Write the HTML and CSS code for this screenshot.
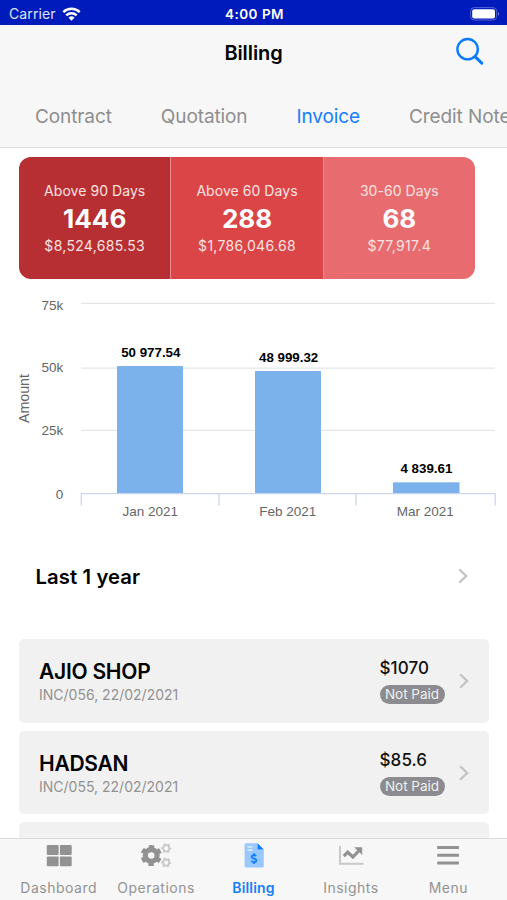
FILE: index.html
```html
<!DOCTYPE html>
<html lang="en">
<head>
	<meta charset="UTF-8">
	<meta name="viewport" content="width=device-width, initial-scale=1.0">
	<title>Billing</title>
	<link rel="stylesheet" href="styles.css">
</head>
<body>
	<div class="app">
		<div class="status_bar">
			<div class="carrier">
				<span>Carrier</span>
				<svg width="19" height="14" viewBox="0 0 19 14" fill="none" stroke="#fff" stroke-width="2.5">
					<path d="M1.3 5.1a11.8 11.8 0 0 1 16.4 0"/>
					<path d="M4.3 8.3a7.5 7.5 0 0 1 10.4 0"/>
					<path d="M6.5 10.7a4.3 4.3 0 0 1 6 0L9.5 13.8z" fill="#fff" stroke="none"/>
				</svg>
			</div>
			<span class="clock">4:00 PM</span>
			<div class="battery">
				<svg width="30" height="14" viewBox="0 0 30 14">
					<rect x="0.6" y="0.6" width="26" height="12.4" rx="3.6" fill="none" stroke="#5563d6" stroke-width="1"/>
					<rect x="2.2" y="2.2" width="22.8" height="9.2" rx="2" fill="#fff"/>
					<path d="M28 4.9c1.6.7 1.6 3.1 0 3.8z" fill="#7683e2"/>
				</svg>
			</div>
		</div>

		<div class="header">
			<h1>Billing</h1>
			<svg class="search" width="30" height="30" viewBox="0 0 30 30" fill="none" stroke="#0a7aff" stroke-width="2.4" stroke-linecap="round">
				<circle cx="12.6" cy="12.2" r="10.2"/>
				<path d="M20 19.6l6.8 6.6" stroke-width="3"/>
			</svg>
		</div>

		<div class="tabs">
			<span class="tab">Contract</span>
			<span class="tab">Quotation</span>
			<span class="tab active">Invoice</span>
			<span class="tab">Credit Note</span>
		</div>

		<div class="content">
			<div class="aging">
				<div class="aging_box a90">
					<span class="label">Above 90 Days</span>
					<strong>1446</strong>
					<span class="sum">$8,524,685.53</span>
				</div>
				<div class="aging_box a60">
					<span class="label">Above 60 Days</span>
					<strong>288</strong>
					<span class="sum">$1,786,046.68</span>
				</div>
				<div class="aging_box a30">
					<span class="label">30-60 Days</span>
					<strong>68</strong>
					<span class="sum">$77,917.4</span>
				</div>
			</div>

			<svg class="chart" width="507" height="240" viewBox="0 290 507 240">
				<g class="grid">
					<path d="M81 303.4H495M81 368.2H495M81 430.4H495"/>
				</g>
				<g class="bars">
					<rect x="117" y="366" width="66" height="127.5"/>
					<rect x="255" y="371" width="66" height="122.5"/>
					<rect x="393" y="482.3" width="66.5" height="11.2"/>
				</g>
				<path class="axis" d="M81 493.7H495.5M81.3 493.5V505.5M219 493.5V505.5M356 493.5V505.5M495.2 493.5V505.5"/>
				<g class="y_labels">
					<text x="63.3" y="309.8">75k</text>
					<text x="63.3" y="371.8">50k</text>
					<text x="63.3" y="435.3">25k</text>
					<text x="63.3" y="498.8">0</text>
				</g>
				<text class="y_title" transform="translate(29 398.5) rotate(-90)">Amount</text>
				<g class="x_labels">
					<text x="150.3" y="516">Jan 2021</text>
					<text x="287.8" y="516">Feb 2021</text>
					<text x="425.3" y="516">Mar 2021</text>
				</g>
				<g class="values">
					<text x="150.8" y="357.3">50 977.54</text>
					<text x="288.6" y="362.2">48 999.32</text>
					<text x="426.4" y="473.4">4 839.61</text>
				</g>
			</svg>

			<div class="period">
				<h2>Last 1 year</h2>
				<svg class="chevron" width="10" height="16" viewBox="0 0 10 16"><path d="M1.2 1.2L8.2 8L1.2 14.8"/></svg>
			</div>

			<div class="invoices">
				<div class="invoice">
					<div class="info">
						<h3>AJIO SHOP</h3>
						<p>INC/056, 22/02/2021</p>
					</div>
					<div class="amount">
						<span class="price">$1070</span>
						<span class="badge">Not Paid</span>
					</div>
					<svg class="chevron" width="10" height="16" viewBox="0 0 10 16"><path d="M1.2 1.2L8.2 8L1.2 14.8"/></svg>
				</div>
				<div class="invoice">
					<div class="info">
						<h3>HADSAN</h3>
						<p>INC/055, 22/02/2021</p>
					</div>
					<div class="amount">
						<span class="price">$85.6</span>
						<span class="badge">Not Paid</span>
					</div>
					<svg class="chevron" width="10" height="16" viewBox="0 0 10 16"><path d="M1.2 1.2L8.2 8L1.2 14.8"/></svg>
				</div>
				<div class="invoice"></div>
			</div>
		</div>

		<div class="nav">
			<div class="nav_item">
				<svg width="32" height="28" viewBox="0 0 32 28" fill="#929292">
					<rect x="3.8" y="3" width="11.8" height="10" rx="1"/>
					<rect x="16.9" y="3" width="11.8" height="10" rx="1"/>
					<rect x="3.8" y="14.6" width="11.8" height="9.6" rx="1"/>
					<rect x="16.9" y="14.6" width="11.8" height="9.6" rx="1"/>
				</svg>
				<span>Dashboard</span>
			</div>
			<div class="nav_item">
				<svg width="32" height="28" viewBox="0 0 32 28" fill="none">
					<circle cx="11.2" cy="13.5" r="5.9" stroke="#929292" stroke-width="5.2"/>
					<circle cx="11.2" cy="13.5" r="8.8" stroke="#929292" stroke-width="3.6" stroke-dasharray="5 4.215" stroke-dashoffset="2.5" transform="rotate(30 11.2 13.5)"/>
					<g stroke="#c9c9c9">
						<circle cx="26.2" cy="6.3" r="3.1" stroke-width="1.8"/>
						<circle cx="26.2" cy="6.3" r="4.4" stroke-width="1.4" stroke-dasharray="2.1 2.508" stroke-dashoffset="1.05"/>
						<circle cx="26.2" cy="20.6" r="3.1" stroke-width="1.8"/>
						<circle cx="26.2" cy="20.6" r="4.4" stroke-width="1.4" stroke-dasharray="2.1 2.508" stroke-dashoffset="1.05"/>
					</g>
				</svg>
				<span>Operations</span>
			</div>
			<div class="nav_item active">
				<svg width="32" height="28" viewBox="0 0 32 28">
					<path d="M8.1 1.3H19.5v6.2h6.3v16.4a1.5 1.5 0 0 1-1.5 1.5H8.1a1.5 1.5 0 0 1-1.5-1.5V2.8a1.5 1.5 0 0 1 1.5-1.5z" fill="#99c8ff"/>
					<path d="M19.5 1.3l6.3 6.2h-6.3z" fill="#087aff"/>
					<path d="M9.5 4.8h4.8M9.5 8.2h4.8" stroke="#d9eaff" stroke-width="1.8"/>
					<path d="M18.1 14.2c-.5-1.2-4.4-1.4-4.4.8 0 2.2 4.7 1.1 4.7 3.4 0 2.2-4.4 2-5 .4M16.1 11.2v2M16.1 20v2" stroke="#087aff" stroke-width="1.7" fill="none"/>
				</svg>
				<span>Billing</span>
			</div>
			<div class="nav_item">
				<svg width="32" height="28" viewBox="0 0 32 28" fill="none">
					<path d="M5 4v17.7h23.5" stroke="#c9c9c9" stroke-width="2"/>
					<path d="M8.8 14.2l3.9-4 5.2 4.8 6.8-7.2" stroke="#929292" stroke-width="3.2"/>
					<path d="M19.2 5.2h8v7.7z" fill="#929292"/>
				</svg>
				<span>Insights</span>
			</div>
			<div class="nav_item">
				<svg width="32" height="28" viewBox="0 0 32 28" stroke="#929292" stroke-width="3">
					<path d="M5.2 5.5h21.7M5.2 13.3h21.7M5.2 21h21.7"/>
				</svg>
				<span>Menu</span>
			</div>
		</div>
	</div>
</body>
</html>
```
FILE: styles.css
```css
body {
	margin: 0;
	background-color: #fff;
	font-family: Inter, "Liberation Sans", sans-serif;
}

h1, h2, h3, p {
	margin: 0;
}

.app {
	display: flex;
	flex-direction: column;
	height: 100vh;
	overflow: hidden;
}

.status_bar {
	display: grid;
	grid-template-columns: 1fr auto 1fr;
	align-items: center;
	flex: none;
	height: 25px;
	padding: 2px 7px 0 9px;
	box-sizing: border-box;
	background-color: #001bbb;
	color: #fff;
	font-size: 13.5px;
}

.carrier {
	display: flex;
	align-items: center;
	gap: 6px;
	color: #dfe3fa;
	font-size: 14px;
	letter-spacing: 0.1px;
}

.clock {
	font-weight: 600;
	letter-spacing: 0.5px;
}

.battery {
	display: flex;
	justify-content: flex-end;
}

.header {
	display: grid;
	grid-template-columns: 1fr auto 1fr;
	align-items: center;
	flex: none;
	height: 54px;
	padding: 0 22px;
	background-color: #f7f7f7;
}

.header h1 {
	grid-column: 2;
	padding-top: 1px;
	font-size: 20px;
	font-weight: 600;
	letter-spacing: -0.1px;
}

.search {
	justify-self: end;
}

.tabs {
	display: flex;
	align-items: center;
	flex: none;
	gap: 49px;
	height: 69px;
	padding: 6px 0 0 35px;
	box-sizing: border-box;
	background-color: #f7f7f7;
	border-bottom: 1px solid #dedede;
	overflow: hidden;
}

.tab {
	flex: none;
	color: #8e8e8e;
	font-size: 19px;
	letter-spacing: -0.1px;
	white-space: nowrap;
}

.tab.active {
	color: #147efb;
}

.content {
	flex: 1;
	min-height: 0;
	overflow: hidden;
}

.aging {
	display: flex;
	width: 456px;
	height: 122px;
	margin: 9px 0 0 19px;
	border-radius: 12px;
	overflow: hidden;
}

.aging_box {
	display: flex;
	flex: 1;
	flex-direction: column;
	align-items: center;
	padding-top: 25px;
	color: #fff;
}

.aging_box + .aging_box {
	border-left: 1px solid #f08c8e;
}

.a90 {
	background-color: #b72f32;
}

.a60 {
	background-color: #db4548;
}

.a30 {
	background-color: #e86c6f;
}

.aging_box .label,
.aging_box .sum {
	color: #fbe3e1;
	font-size: 14px;
	line-height: 18px;
	letter-spacing: 0.3px;
}

.aging_box .label {
	letter-spacing: 0.05px;
}

.aging_box strong {
	font-size: 26px;
	line-height: 37px;
	font-weight: 700;
}

.chart {
	display: block;
	margin-top: 11px;
	font-family: "Liberation Sans", Arial, sans-serif;
}

.grid path {
	fill: none;
	stroke: #e4e5e9;
	stroke-width: 1.2;
}

.axis {
	fill: none;
	stroke: #ccd6eb;
	stroke-width: 1.3;
}

.bars {
	fill: #7cb2ec;
}

.y_labels,
.x_labels,
.y_title {
	fill: #666;
	font-size: 13.5px;
}

.y_title {
	font-size: 14.2px;
}

.y_labels {
	text-anchor: end;
}

.y_title,
.x_labels,
.values {
	text-anchor: middle;
}

.values {
	fill: #000;
	font-size: 13.3px;
	font-weight: bold;
}

.period {
	display: flex;
	align-items: center;
	justify-content: space-between;
	height: 92px;
	padding: 0 39.5px 0 35.5px;
}

.period h2 {
	font-size: 20.3px;
	font-weight: 600;
	letter-spacing: 0.1px;
}

.chevron {
	flex: none;
	fill: none;
	stroke: #c2c2c4;
	stroke-width: 2.2;
}

.invoices {
	display: flex;
	flex-direction: column;
	gap: 8px;
	margin: 17px 18.5px 0 19px;
}

.invoice {
	display: flex;
	align-items: center;
	flex: none;
	height: 83.7px;
	padding: 0 20px 0 20px;
	box-sizing: border-box;
	border-radius: 5px;
	background-color: #f1f1f1;
}

.info {
	flex: 1;
	padding-top: 2px;
}

.info h3 {
	font-size: 21px;
	line-height: 26px;
	font-weight: 600;
	letter-spacing: -0.25px;
}

.info p {
	color: #929292;
	font-size: 14px;
	line-height: 20px;
}

.amount {
	display: flex;
	flex-direction: column;
	align-items: flex-start;
	width: 79px;
}

.price {
	color: #111;
	font-size: 17px;
	line-height: 22px;
	font-weight: 500;
	letter-spacing: 0.1px;
}

.badge {
	width: 65px;
	height: 19px;
	margin-top: 6px;
	border-radius: 10px;
	background-color: #8b8b90;
	color: #f1f1f1;
	font-size: 13.5px;
	line-height: 19px;
	text-align: center;
	white-space: nowrap;
}

.nav {
	display: flex;
	flex: none;
	height: 62px;
	padding: 0 10px;
	box-sizing: border-box;
	border-top: 1px solid #dcdcdc;
	background-color: #f7f7f7;
}

.nav_item {
	display: flex;
	flex: 1;
	flex-direction: column;
	align-items: center;
	gap: 9px;
	padding-top: 3px;
	color: #939393;
	font-size: 14px;
	line-height: 18px;
}

.nav_item span {
	letter-spacing: 0.5px;
}

.nav_item.active {
	color: #147efb;
	font-weight: 600;
}

.nav_item.active span {
	letter-spacing: 0.2px;
}
```
